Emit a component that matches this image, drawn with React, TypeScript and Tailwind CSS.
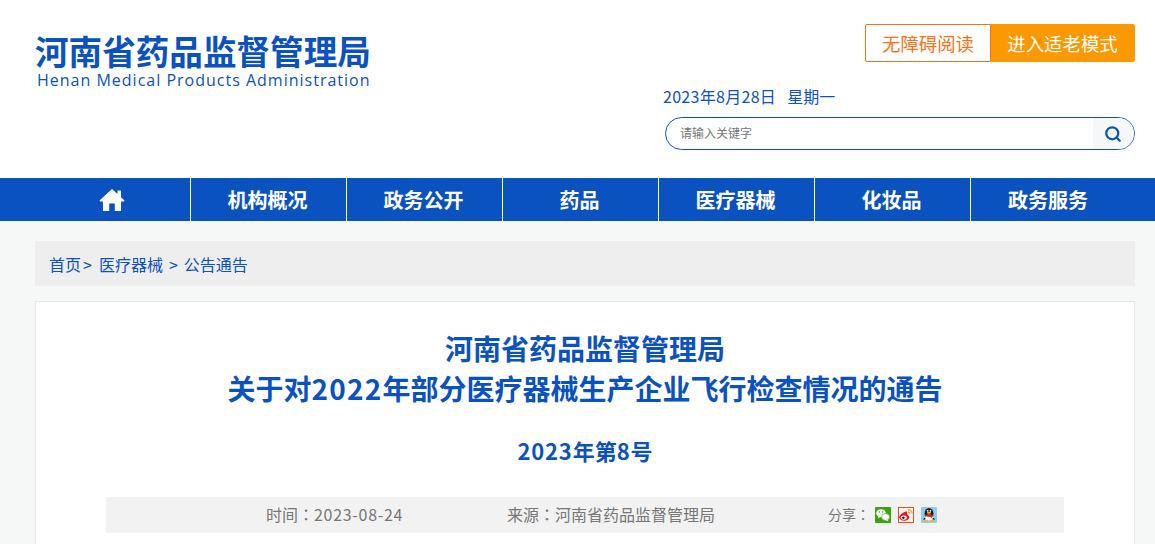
import { Search } from "lucide-react";

const font = { fontFamily: '"Noto Sans CJK SC", "Liberation Sans", sans-serif' };

const navItems = ["机构概况", "政务公开", "药品", "医疗器械", "化妆品", "政务服务"];

const WechatIcon = () => (
  <svg width="16" height="16" viewBox="0 0 16 16">
    <rect x="0" y="0" width="16" height="16" rx="1" fill="#3ba30f" />
    <ellipse cx="6" cy="6.2" rx="4.8" ry="4" fill="#fff" />
    <path d="M3.4 8.8 L3 11.2 L5.8 9.8 Z" fill="#fff" />
    <ellipse cx="10.6" cy="10" rx="4" ry="3.4" fill="#fff" stroke="#3ba30f" strokeWidth="0.6" />
    <path d="M12.4 12.4 L13.4 14.2 L10.6 13 Z" fill="#fff" />
    <circle cx="4.4" cy="5" r="0.8" fill="#3ba30f" />
    <circle cx="7.6" cy="5" r="0.8" fill="#3ba30f" />
  </svg>
);

const WeiboIcon = () => (
  <svg width="16" height="16" viewBox="0 0 16 16">
    <rect x="0.5" y="0.5" width="15" height="15" fill="#fff4ec" stroke="#e8501e" />
    <ellipse cx="6.2" cy="10.2" rx="5" ry="3.6" fill="#e6162d" />
    <path d="M9 4.4 C6 4.4 3 7 1.6 9.4 L9 9 Z" fill="#e6162d" />
    <ellipse cx="5.8" cy="10.6" rx="3" ry="2.2" fill="#fff" />
    <circle cx="5.4" cy="10.8" r="1.3" fill="#222" />
    <path d="M10 2.6 A4 4 0 0 1 14 6.6 M10 5 A1.8 1.8 0 0 1 11.8 6.8" fill="none" stroke="#f5a623" strokeWidth="1.3" />
  </svg>
);

const QQIcon = () => (
  <svg width="16" height="16" viewBox="0 0 16 16">
    <rect x="0" y="0" width="16" height="16" rx="1" fill="#8ccdf2" />
    <ellipse cx="8" cy="6.4" rx="4.4" ry="5.4" fill="#1a1a1a" />
    <path d="M3 11 C2 12.5 2.4 13.4 3.6 12.6 L5 11 Z M13 11 C14 12.5 13.6 13.4 12.4 12.6 L11 11 Z" fill="#1a1a1a" />
    <ellipse cx="8" cy="10.4" rx="3.6" ry="3" fill="#fff" />
    <path d="M3.4 7.8 L12.6 7.8 L12 9.2 L10.8 9.4 L11 11.6 L9.4 10 L4 9.2 Z" fill="#e0201b" />
    <ellipse cx="8" cy="5.8" rx="2.2" ry="1" fill="#f5b81f" />
    <circle cx="6.6" cy="3.8" r="0.9" fill="#fff" />
    <circle cx="9.4" cy="3.8" r="0.9" fill="#fff" />
    <ellipse cx="5.2" cy="14" rx="2.4" ry="1.1" fill="#f5b81f" />
    <ellipse cx="10.8" cy="14" rx="2.4" ry="1.1" fill="#f5b81f" />
  </svg>
);

export default function App() {
  return (
    <div className="h-[544px] overflow-hidden bg-[#f6f8f7]" style={font}>
      <header className="h-[178px] bg-white">
        <div className="ml-[35px] flex w-[1100px] justify-between">
          <div className="w-[336px] pt-[31px] text-[#0b52c1]">
            <div className="text-[33.6px] leading-[40px] font-bold whitespace-nowrap">河南省药品监督管理局</div>
            <div
              className="ml-[2px] text-[16px] leading-[18px] tracking-[1px] whitespace-nowrap"
              style={{ fontFamily: '"Open Sans", sans-serif' }}
            >
              Henan Medical Products Administration
            </div>
          </div>
          <div className="w-[470px] pt-[24px]">
            <div className="flex justify-end">
              <div className="flex h-[38px] w-[126px] items-center justify-center rounded-l-[2px] border border-[#f97316] bg-white pt-[2px] text-[18.4px] text-[#f97316]">
                无障碍阅读
              </div>
              <div className="flex h-[38px] w-[144px] items-center justify-center rounded-r-[2px] bg-[#fb9902] pt-[2px] pr-[1px] text-[18.4px] text-white">
                进入适老模式
              </div>
            </div>
            <div className="mt-[24px] flex h-[20px] items-center text-[16px] text-[#0b52c1]">
              <span className="ml-[-2px] tracking-[0.3px]">2023年8月28日</span>
              <span className="ml-[11px]">星期一</span>
            </div>
            <div className="mt-[11px] flex h-[33px] items-center overflow-hidden rounded-full border border-[#0b52c1] bg-white">
              <span className="flex-1 pb-[2px] pl-[14px] text-[12px] text-[#777]">请输入关键字</span>
              <span className="flex h-full w-[41px] items-center justify-center bg-[#f6f7f8] pr-[2px]">
                <Search size={18} strokeWidth={3} className="text-[#0b52c1]" />
              </span>
            </div>
          </div>
        </div>
      </header>

      <nav className="flex h-[43px] bg-[#0b52c1] pl-[35px] text-white">
        <div className="flex w-[156px] items-center justify-center border-r-1 border-white pr-[2px]">
          <svg width="26" height="24" viewBox="0 0 26 24" fill="#fff">
            <path d="M13 1 L18.5 6 L18.5 2.5 L22 2.5 L22 9.2 L25.5 12.4 L25 13.4 L22 13.4 L22 23 L15.8 23 L15.8 15.5 L10.2 15.5 L10.2 23 L4 23 L4 13.4 L1 13.4 L0.5 12.4 Z" />
          </svg>
        </div>
        {navItems.map((item, index) => (
          <div
            key={item}
            className={`flex w-[156px] items-center justify-center pr-[2px] text-[20px] font-bold ${index < navItems.length - 1 ? "border-r-1 border-white" : ""}`}
          >
            {item}
          </div>
        ))}
      </nav>

      <main className="ml-[35px] w-[1100px] pt-[20px]">
        <div className="flex h-[45px] items-center bg-[#eeeeee] pl-[14px] text-[16px] text-[#0b52c1]">
          <span>首页</span>
          <span className="ml-[2px]">&gt;</span>
          <span className="ml-[7px]">医疗器械</span>
          <span className="ml-[6px]">&gt;</span>
          <span className="ml-[6px]">公告通告</span>
        </div>
        <article className="mt-[15px] h-[300px] border border-[#e6e8e8] bg-white">
          <h1 className="pt-[26px] text-center text-[28px] leading-[40px] font-bold text-[#0b52c1]">
            河南省药品监督管理局
            <br />
            关于对<span className="tracking-[1.2px]">2022</span>年部分医疗器械生产企业飞行检查情况的通告
          </h1>
          <div className="mt-[22px] text-center text-[22px] leading-[40px] font-bold text-[#0b52c1]">
            <span className="tracking-[0.8px]">2023</span>年第<span className="tracking-[0.8px]">8</span>号
          </div>
          <div className="mx-[70px] mt-[27px] flex h-[36px] items-center bg-[#f2f2f2] pb-[2px] text-[16px] text-[#777]">
            <span className="ml-[160px] w-[241px]">
              时间<span className="font-['Noto_Sans_CJK_TC']">：</span>
              <span className="tracking-[0.7px]">2023-08-24</span>
            </span>
            <span className="w-[321px]">
              来源<span className="font-['Noto_Sans_CJK_TC']">：</span>河南省药品监督管理局
            </span>
            <span className="w-[47px] text-[14px]">
              分享<span className="font-['Noto_Sans_CJK_TC']">：</span>
            </span>
            <span className="flex gap-[7px] pt-[2px]">
              <WechatIcon />
              <WeiboIcon />
              <QQIcon />
            </span>
          </div>
        </article>
      </main>
    </div>
  );
}
